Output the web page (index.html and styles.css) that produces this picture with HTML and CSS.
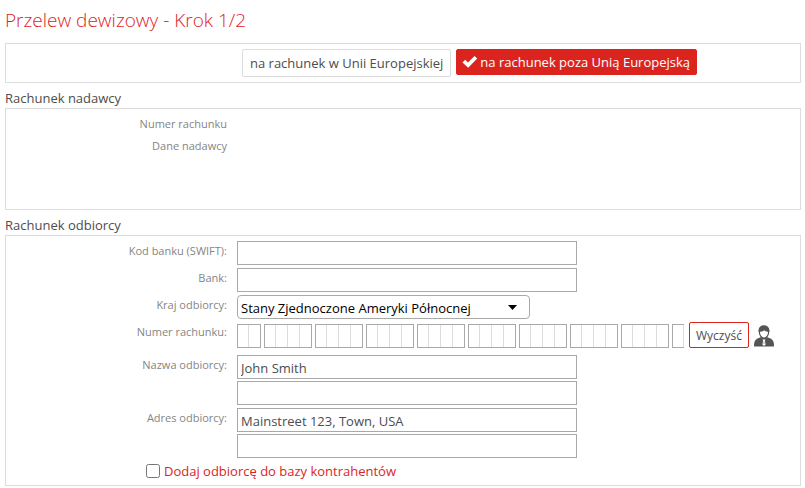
FILE: index.html
```html
<!DOCTYPE html>
<html lang="pl">
<head>
    <meta charset="UTF-8">
    <meta name="viewport" content="width=device-width, initial-scale=1.0">
    <title>Przelew dewizowy</title>
    <link rel="stylesheet" href="styles.css">
</head>
<body>
    <h1>Przelew dewizowy - Krok 1/2</h1>

    <form>
        <div class="panel type">
            <button type="button" class="btn">na rachunek w Unii Europejskiej</button>
            <button type="button" class="btn active">
                <svg width="16" height="14" viewBox="0 0 16 14"><path d="M.5 7.500 3.200 4.800 6 7.400 12.500 1l2.700 2.500L6.200 12.800z" fill="#fff"/></svg>
                na rachunek poza Unią Europejską
            </button>
        </div>

        <h2>Rachunek nadawcy</h2>
        <div class="panel sender">
            <div class="label">Numer rachunku</div>
            <div class="label">Dane nadawcy</div>
        </div>

        <h2>Rachunek odbiorcy</h2>
        <div class="panel recipient">
            <div class="row">
                <label class="label" for="swift">Kod banku (SWIFT):</label>
                <input type="text" class="field" id="swift">
            </div>
            <div class="row">
                <label class="label" for="bank">Bank:</label>
                <input type="text" class="field" id="bank">
            </div>
            <div class="row">
                <label class="label" for="country">Kraj odbiorcy:</label>
                <select class="country" id="country">
                    <option>Stany Zjednoczone Ameryki Północnej</option>
                </select>
            </div>
            <div class="row account">
                <label class="label" for="account">Numer rachunku:</label>
                <div class="digits">
                    <input type="text" class="cells two" id="account" maxlength="2">
                    <input type="text" class="cells" maxlength="4" aria-label="Cyfry 3-6">
                    <input type="text" class="cells" maxlength="4" aria-label="Cyfry 7-10">
                    <input type="text" class="cells" maxlength="4" aria-label="Cyfry 11-14">
                    <input type="text" class="cells" maxlength="4" aria-label="Cyfry 15-18">
                    <input type="text" class="cells" maxlength="4" aria-label="Cyfry 19-22">
                    <input type="text" class="cells" maxlength="4" aria-label="Cyfry 23-26">
                    <input type="text" class="cells" maxlength="4" aria-label="Cyfry 27-30">
                    <input type="text" class="cells" maxlength="4" aria-label="Cyfry 31-34">
                    <input type="text" class="cells last" maxlength="1" aria-label="Cyfra 35">
                </div>
                <button type="reset" class="clear">Wyczyść</button>
                <button type="button" class="person" aria-label="Kontrahenci">
                    <svg width="20" height="22" viewBox="0 0 20 22">
                        <path d="M0 21.500c0-4 .7-6.500 3-7.700l3.500-1.600h7l3.500 1.600c2.300 1.200 3 3.700 3 7.700z" fill="#555"/>
                        <path d="M5.300 6.500C5.300 3 7 1.200 10 1.200s4.700 1.800 4.700 5.300-2 6.700-4.700 6.700-4.700-3.200-4.700-6.700z" fill="#fff" stroke="#555" stroke-width="1.200"/>
                        <path d="M4.600 6.800C4.200 2.800 6.300.5 10 .5s5.800 2.300 5.400 6.300c-2.300.1-3.900-.5-5-1.600-1.400 1.200-3.300 1.700-5.800 1.600z" fill="#555"/>
                        <path d="M8.600 14.500h2.800l-.5 1.500.7 3.600-1.600 1.500-1.600-1.500.7-3.600z" fill="#fff"/>
                        <path d="M9.600 16.500h.8v2.500h-.8z" fill="#999"/>
                    </svg>
                </button>
            </div>
            <div class="row">
                <label class="label" for="name">Nazwa odbiorcy:</label>
                <div class="lines">
                    <input type="text" class="field" id="name" value="John Smith">
                    <input type="text" class="field" aria-label="Nazwa odbiorcy cd.">
                </div>
            </div>
            <div class="row">
                <label class="label" for="address">Adres odbiorcy:</label>
                <div class="lines">
                    <input type="text" class="field" id="address" value="Mainstreet 123, Town, USA">
                    <input type="text" class="field" aria-label="Adres odbiorcy cd.">
                </div>
            </div>
            <div class="save">
                <input type="checkbox" id="save">
                <label for="save">Dodaj odbiorcę do bazy kontrahentów</label>
            </div>
        </div>
    </form>
</body>
</html>
```
FILE: styles.css
```css
* {
    box-sizing: border-box;
}
body {
    margin: 0 4px 2px 5px;
    font-family: "Open Sans", "Noto Sans", sans-serif;
    font-size: 13px;
    color: #4d4d4d;
    background: #fff;
}
h1 {
    margin: 0;
    padding: 6px 0 9px;
    font-size: 19px;
    line-height: 28px;
    font-weight: 300;
    color: #dc241f;
}
h2 {
    margin: 0;
    padding-top: 6px;
    font-size: 13px;
    line-height: 19px;
    font-weight: normal;
}
button, input, select {
    margin: 0;
    font: inherit;
    color: inherit;
}
button {
    cursor: pointer;
}
.panel {
    border: 1px solid #dcdcdc;
}
.type {
    display: flex;
    align-items: flex-start;
    gap: 5px;
    padding: 5px 5px 5px 236px;
}
.btn {
    display: flex;
    align-items: center;
    gap: 2px;
    height: 28px;
    padding: 0 7px;
    border: 1px solid #dcdcdc;
    border-radius: 2px;
    background: #fff;
    white-space: nowrap;
}
.active {
    height: 26px;
    padding: 0 6px 0 5px;
    border-color: #dc241f;
    background: #dc241f;
    color: #fff;
}
.label {
    flex: none;
    width: 221px;
    font-size: 11px;
    line-height: 20px;
    text-align: right;
    color: #858585;
}
.sender {
    display: flex;
    flex-direction: column;
    gap: 2px;
    min-height: 102px;
    padding-top: 5px;
}
.recipient {
    display: flex;
    flex-direction: column;
    gap: 3px;
    padding: 5px 0 4px;
}
.row {
    display: flex;
    align-items: flex-start;
    gap: 10px;
}
.lines {
    display: flex;
    flex: 1;
    flex-direction: column;
    gap: 2px;
}
.field {
    width: 100%;
    max-width: 340px;
    height: 24px;
    padding: 2px 3px 0;
    border: 1px solid #a9a9a9;
}
.country {
    width: 293px;
    height: 24px;
    padding: 2px 24px 0 3px;
    border: 1px solid #a9a9a9;
    border-radius: 4px;
    appearance: none;
    color: #000;
    background: #fff url("data:image/svg+xml,%3Csvg xmlns='http://www.w3.org/2000/svg' width='9' height='5'%3E%3Cpath d='M0 0h9L4.500 5z'/%3E%3C/svg%3E") no-repeat right 12px center;
}
.account {
    gap: 5px;
    padding-bottom: 4px;
}
.account .label {
    margin-right: 5px;
}
.digits {
    display: flex;
    gap: 3px;
    padding-top: 2px;
}
.cells {
    width: 48px;
    height: 24px;
    padding: 0 2px;
    border: 1px solid #a9a9a9;
    background: linear-gradient(to right, transparent 11px, #dcdcdc 11px) 0 0 / 12px 100% border-box;
}
.two {
    width: 24px;
}
.last {
    width: 12px;
    border-right: 0;
}
.clear {
    height: 26px;
    padding: 0 6px;
    border: 1px solid #dc241f;
    border-radius: 2px;
    background: #fff;
    font-size: 12px;
}
.person {
    display: flex;
    padding: 3px 0 0;
    border: 0;
    background: none;
}
.save {
    display: flex;
    align-items: center;
    gap: 4px;
    padding-left: 140px;
    line-height: 20px;
    color: #dc241f;
}
.save input {
    width: 14px;
    height: 14px;
}
```
